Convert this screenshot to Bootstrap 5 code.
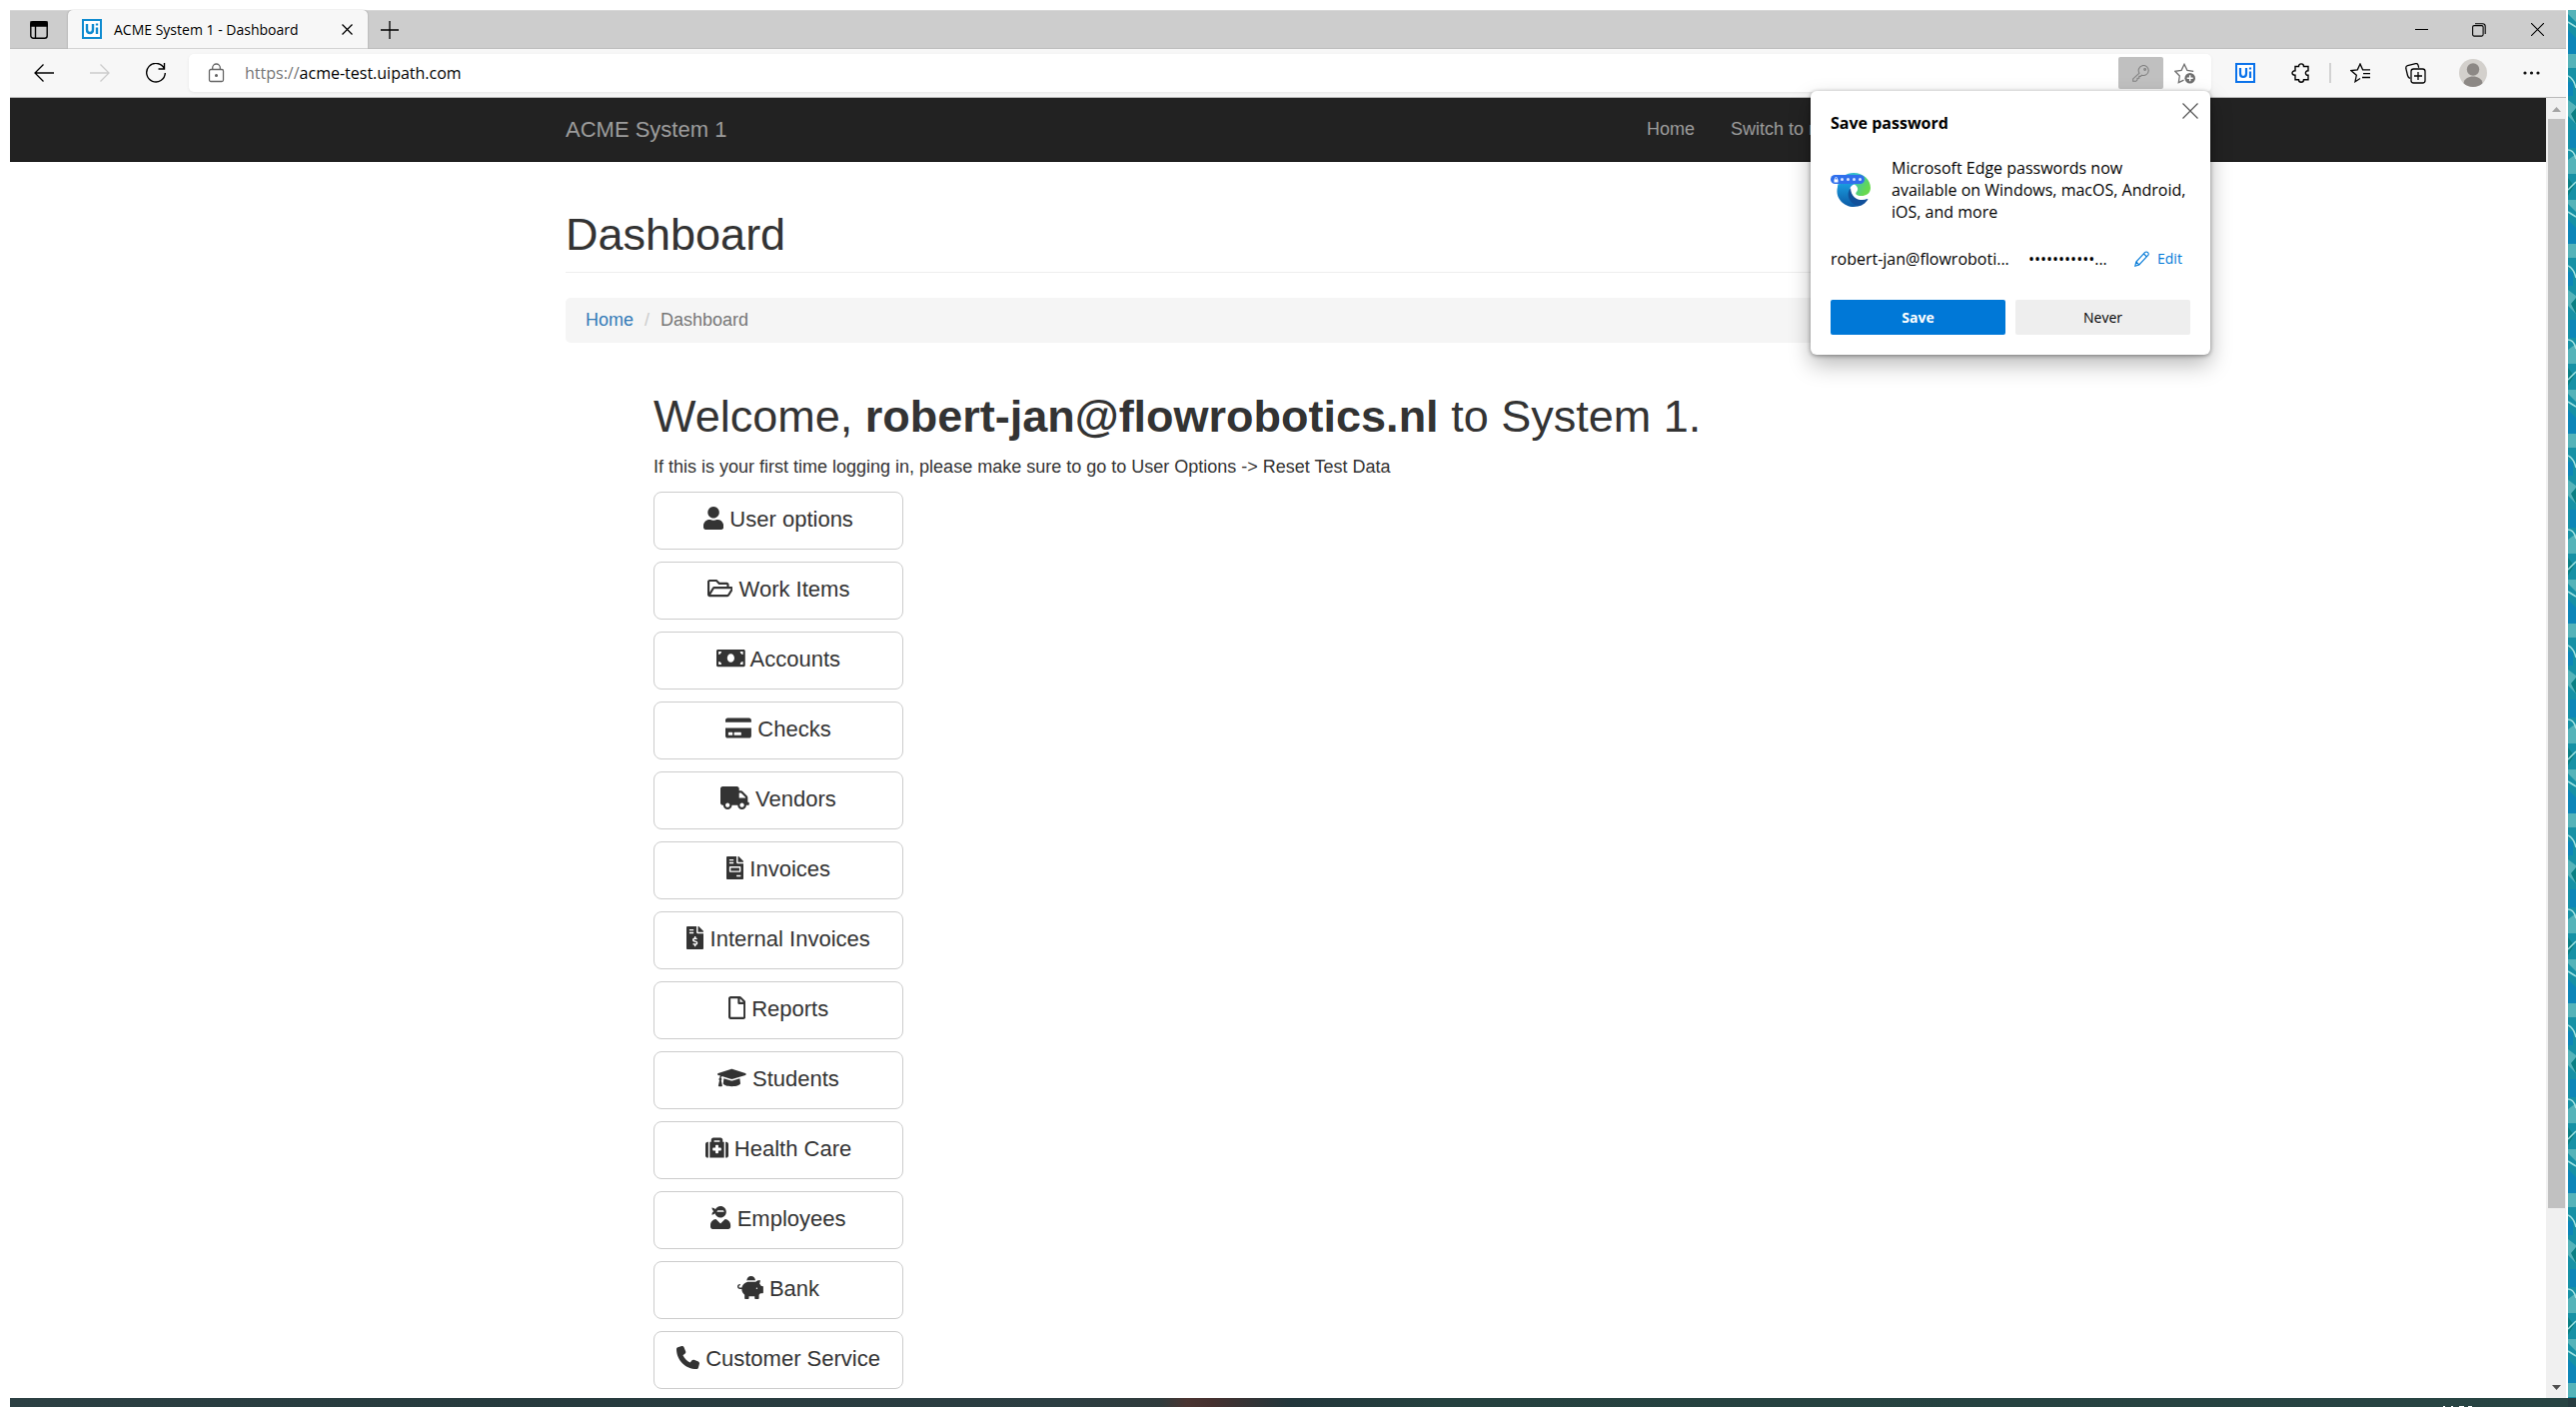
<!DOCTYPE html>
<html lang="en">
<head>
<meta charset="utf-8">
<meta name="viewport" content="width=device-width, initial-scale=1">
<title>ACME System 1 - Dashboard</title>
<link href="https://cdn.jsdelivr.net/npm/bootstrap@5.3.0/dist/css/bootstrap.min.css" rel="stylesheet">
<style>
  :root { --ui: "Open Sans", "Noto Sans", sans-serif; --page: "Liberation Sans", Arial, sans-serif; }
  body { background: #fff; color: #000; font-family: var(--ui); font-size: 14px; height: 100vh; overflow: hidden; fill: none; stroke: currentColor; }
  svg { flex: none; }
  button { color: inherit; }
  .plain { background: none; border: 0; padding: 0; display: flex; align-items: center; justify-content: center; }
  .desktop { padding: 10px 0 0 10px; min-height: 0; }

  .tabstrip { height: 39px; background: #cdcdcd; border-top: 1px solid #d8d8d8; border-bottom: 1px solid #bdbdbd; }
  .workspace { width: 58px; }
  .new-tab { width: 44px; }
  .tab-current { width: 300px; height: 39px; margin-top: -1px; padding: 0 15px 0 14px; background: #f7f7f7; border-radius: 5px 5px 0 0; box-shadow: 0 0 2px #999; clip-path: inset(0 -3px); }
  .tab-title { margin-left: 12px; }
  .win-button { width: 58px; height: 37px; }

  .toolbar { height: 49px; padding: 0 1px 0 6px; background: #f7f7f7; border-bottom: 1px solid #b9b9b9; }
  .tool { width: 56px; height: 40px; }
  .tool.inactive { color: #ccc; }
  .tool-sm { width: 42px; height: 40px; }
  .tool-lg { width: 68px; height: 40px; }
  .profile { width: 48px; height: 40px; }
  .address { height: 38px; margin-left: 5px; padding: 0 5px 0 19px; background: #fff; border-radius: 5px; box-shadow: 0 1px 3px #e6e6e6; }
  .address label, .address input { font-size: 16px; line-height: 24px; }
  .address label { color: #767676; margin-left: 20px; }
  .address input { border: 0; padding: 0; outline: 0; color: #000; background: transparent; min-width: 0; }
  .key-button { width: 45px; height: 32px; background: #c0c0c0; border-radius: 2px; color: #808080; }
  .star-button { width: 43px; height: 32px; color: #6e6e6e; }
  .divider { width: 2px; height: 20px; background: #d2d2d2; }

  .viewport { min-height: 0; }
  .site { min-width: 0; overflow: hidden; font-family: var(--page); font-size: 18px; line-height: 25px; color: #333; background: #fff; }
  .site .container { max-width: 1464px; padding: 0 19px; }
  .site-nav { height: 64px; padding: 0; background: #222; border-bottom: 1px solid #080808; }
  .site-nav .navbar-brand { color: #9d9d9d; font-size: 22px; line-height: 25px; padding: 0; margin: 0; }
  .site-nav .nav { gap: 36px; padding-right: 172px; }
  .site-nav .nav-link { color: #9d9d9d; padding: 0; }
  .headline { font-size: 45px; line-height: 50px; font-weight: 400; margin: 0; }
  .page-top { padding: 48px 0 12px; border-bottom: 1px solid #eee; margin-bottom: 25px; }
  .site .breadcrumb { padding: 10px 20px; margin: 0 0 49px; background: #f5f5f5; border-radius: 5px; --bs-breadcrumb-divider-color: #ccc; --bs-breadcrumb-item-active-color: #777; --bs-breadcrumb-item-padding-x: 11px; }
  .breadcrumb a { color: #337ab7; text-decoration: none; }
  .welcome { padding-left: 88px; }
  .intro { margin: 13px 0 12px; }
  .menu { gap: 12px; width: 250px; }
  .menu .btn { --bs-btn-color: #333; --bs-btn-border-color: #ccc; --bs-btn-border-radius: 8px; --bs-btn-bg: #fff; font-family: var(--page); font-size: 22px; line-height: 30px; padding: 12px 0 14px; }
  .menu svg { height: 23px; fill: #333; stroke: none; vertical-align: -3px; }

  .scroller { width: 20px; padding: 0 1px 0 2px; background: #f0f0f0; }
  .thumb { background: #c1c1c1; flex: 1090 1 0; }
  .rest { flex: 168 1 0; }

  .prompt { right: 356px; top: 81px; width: 400px; padding: 20px; background: #fff; border-radius: 6px; box-shadow: 0 10px 22px rgba(0,0,0,.28), 0 1px 4px rgba(0,0,0,.4); font-size: 16px; line-height: 22px; z-index: 5; }
  .prompt h2 { font-size: 16px; line-height: 24px; font-weight: 700; margin: 0; }
  .prompt .dismiss { right: 12px; top: 12px; color: #555; }
  .prompt .blurb { margin-top: 22px; gap: 21px; }
  .prompt .login { margin: 24px 0 29px; line-height: 24px; }
  .prompt .who { width: 198px; }
  .prompt .secret { width: 106px; }
  .prompt .edit { color: #0078d7; gap: 8px; font-size: 14px; text-decoration: none; }
  .prompt .choices { gap: 10px; }
  .prompt .btn { height: 35px; padding: 0; border: 0; border-radius: 2px; font-size: 14px; }
  .save { background: #0078d7; color: #fff; font-weight: 700; }
  .never { background: #eee; color: #000; font-weight: 500; }

  .wallpaper { width: 8px; margin-left: 2px; }
  .taskbar { height: 9px; margin-left: 10px; padding-right: 96px; border-right: 8px solid #263c40; color: #fff; background: linear-gradient(90deg, #2c4043 0, #263a3d 20%, #2c3e42 41%, #303b3c 45%, #4a3431 46%, #45302f 47%, #22363b 50%, #25413f 56%, #284443 100%); }
</style>
</head>
<body class="d-flex flex-column">

<div class="desktop d-flex flex-grow-1">
  <div class="d-flex flex-column flex-grow-1 position-relative">

    <header class="tabstrip d-flex align-items-center">
      <button class="plain workspace" aria-label="Tab actions">
        <svg width="18" height="18" viewBox="0 0 18 18" stroke-width="1.4"><rect x=".8" y=".8" width="16.4" height="16.4" rx="2.5"/><path d="M1 1h16v4H1z" fill="#000"/><path d="M5.5 5v12"/></svg>
      </button>
      <div class="tab-current d-flex align-items-center">
        <svg width="20" height="20" viewBox="0 0 20 20" stroke="#0f8bd0" stroke-width="2"><path d="M1 1h18v18H1z" fill="#fff"/><path d="M5 5v5.500q0 3.500 3 3.500t3-3.500V5M15 8.500V15M15 4.500v2" stroke-width="2.400"/></svg>
        <span class="tab-title">ACME System 1 - Dashboard</span>
        <button class="plain ms-auto" aria-label="Close tab"><svg width="11" height="11" viewBox="0 0 11 11" stroke-width="1.300"><path d="M.5.5l10 10M10.500.5l-10 10"/></svg></button>
      </div>
      <button class="plain new-tab" aria-label="New tab"><svg width="18" height="18" viewBox="0 0 18 18" stroke-width="1.300"><path d="M9 0v18M0 9h18"/></svg></button>
      <div class="d-flex ms-auto">
        <button class="plain win-button" aria-label="Minimize"><svg width="13" height="13" viewBox="0 0 13 13"><path d="M0 6.500h13"/></svg></button>
        <button class="plain win-button" aria-label="Restore"><svg width="14" height="14" viewBox="0 0 14 14" stroke-width="1.100"><rect x=".6" y="2.600" width="10.500" height="10.500" rx="1.500"/><path d="M3 .7h7.500q2.700 0 2.700 2.700V11"/></svg></button>
        <button class="plain win-button" aria-label="Close"><svg width="13" height="13" viewBox="0 0 13 13" stroke-width="1.100"><path d="M0 0l13 13M13 0L0 13"/></svg></button>
      </div>
    </header>

    <div class="toolbar d-flex align-items-center">
      <button class="plain tool" aria-label="Back"><svg width="20" height="18" viewBox="0 0 20 18" stroke-width="1.300"><path d="M20 9H1M9.500.5L1 9l8.500 8.500"/></svg></button>
      <button class="plain tool inactive" aria-label="Forward"><svg width="20" height="18" viewBox="0 0 20 18" stroke-width="1.300"><path d="M0 9h19M10.500.5L19 9l-8.500 8.500"/></svg></button>
      <button class="plain tool" aria-label="Reload"><svg width="20" height="20" viewBox="0 0 20 20" stroke-width="1.400"><path d="M18.300 5.500A9.300 9.300 0 1 0 19.300 10M18.500 0v6h-6"/></svg></button>
      <div class="address d-flex align-items-center flex-grow-1">
        <svg width="17" height="20" viewBox="0 0 17 20" stroke="#666" stroke-width="1.300"><rect x="1.500" y="6.500" width="14" height="12" rx="1.500"/><path d="M4.700 6.500V4.800a3.800 3.800 0 0 1 7.600 0v1.700"/><circle cx="8.500" cy="12.500" r=".9" fill="#666"/></svg>
        <label for="url">https://</label><input id="url" class="flex-grow-1" type="text" value="acme-test.uipath.com">
        <button class="plain key-button" aria-label="Save password"><svg width="17" height="17" viewBox="0 0 17 17" stroke-width="1.100"><path d="M7 8.200A5 5 0 1 1 9.500 10.200L8.300 11.400H6.800v1.800H5v1.600L3.700 16.300H.7v-2.400z"/><circle cx="12.600" cy="4.500" r=".9"/></svg></button>
        <button class="plain star-button" aria-label="Add to favorites"><svg width="22" height="21" viewBox="0 0 22 21" stroke-width="1.300"><path d="M9.500 17.200L4.300 19.600 5.300 13 .8 8.300l6.300-1L10 1.300l2.900 6 6.300 1"/><circle cx="15.700" cy="15.200" r="5.300" fill="#6e6e6e" stroke="none"/><path d="M15.700 12.200v6M12.700 15.200h6" stroke="#fff" stroke-width="1.500"/></svg></button>
      </div>
      <div class="d-flex align-items-center">
        <button class="plain tool-lg" aria-label="UiPath extension"><svg width="20" height="20" viewBox="0 0 20 20" stroke="#0a72ea" stroke-width="2"><path d="M1 1h18v18H1z" fill="#fff"/><path d="M5 5v5.500q0 3.500 3 3.500t3-3.500V5M15 8.500V15M15 4.500v2" stroke-width="2.200"/></svg></button>
        <button class="plain tool-sm" aria-label="Extensions"><svg width="19" height="20" viewBox="0 0 19 20" stroke-width="1.400"><path d="M4 3.500h3.500C7.500 0 12.500 0 12.500 3.500H17v4.300c-3.500-.3-3.500 4.700 0 4.500v4.500h-4.500c0 3.300-5 3.300-5 0H4v-4.500C0 12.500 0 7.600 4 7.800z"/></svg></button>
        <span class="divider mx-2"></span>
        <button class="plain tool-sm" aria-label="Favorites"><svg width="21" height="20" viewBox="0 0 21 20" stroke-width="1.300"><path d="M10 15.500L5 18.700 6.300 12.300.8 7.500l6.500-.7L10 1l2.600 5.800H20M13 10.700h7M12 14.500h8"/></svg></button>
        <button class="plain tool-lg" aria-label="Collections"><svg width="21" height="21" viewBox="0 0 21 21" stroke-width="1.300"><path d="M5 15.500Q3 14.500 2.500 12.500L.8 5.500Q.5 3.200 2.500 2.700l8-2q2-.4 2.500 1.500l.7 2.500"/><rect x="6" y="6" width="14" height="14" rx="2.500"/><path d="M13 9v8M9 13h8"/></svg></button>
        <button class="plain profile" aria-label="Profile"><svg width="28" height="28" viewBox="0 0 28 28" stroke="none"><circle cx="14" cy="14" r="14" fill="#d3d0cc"/><circle cx="14" cy="10.500" r="6.200" fill="#8c8885"/><path d="M4.500 24.200c1-9 18-9 19 0A14 14 0 0 1 4.500 24.200z" fill="#8c8885"/></svg></button>
        <button class="plain tool-lg" aria-label="Settings and more"><svg width="17" height="4" viewBox="0 0 17 4" stroke="none" fill="#111"><circle cx="2" cy="2" r="1.600"/><circle cx="8.500" cy="2" r="1.600"/><circle cx="15" cy="2" r="1.600"/></svg></button>
      </div>
    </div>

    <div class="viewport d-flex flex-grow-1">
      <div class="site flex-grow-1">
        <nav class="site-nav navbar">
          <div class="container">
            <a class="navbar-brand" href="#">ACME System 1</a>
            <ul class="nav ms-auto">
              <li class="nav-item"><a class="nav-link" href="#">Home</a></li>
              <li class="nav-item"><a class="nav-link" href="#">Switch to n</a></li>
            </ul>
          </div>
        </nav>
        <main class="container">
          <div class="page-top"><h1 class="headline">Dashboard</h1></div>
          <nav aria-label="breadcrumb">
            <ol class="breadcrumb">
              <li class="breadcrumb-item"><a href="#">Home</a></li>
              <li class="breadcrumb-item active" aria-current="page">Dashboard</li>
            </ol>
          </nav>
          <section class="welcome">
            <h1 class="headline">Welcome, <strong>robert-jan@flowrobotics.nl</strong> to System 1.</h1>
            <p class="intro">If this is your first time logging in, please make sure to go to User Options -&gt; Reset Test Data</p>
            <div class="menu d-flex flex-column">
              <a class="btn" href="#"><svg viewBox="0 0 448 512"><path d="M224 256c70.7 0 128-57.3 128-128S294.7 0 224 0 96 57.3 96 128s57.3 128 128 128zm89.600 32h-16.700c-22.200 10.200-46.900 16-72.900 16s-50.600-5.800-72.900-16h-16.700C60.200 288 0 348.200 0 422.400V464c0 26.500 21.500 48 48 48h352c26.500 0 48-21.500 48-48v-41.600c0-74.200-60.200-134.400-134.400-134.400z"/></svg> User options</a>
              <a class="btn" href="#"><svg viewBox="0 0 576 512"><path d="M527.900 224H480v-48c0-26.500-21.500-48-48-48H272l-64-64H48C21.500 64 0 85.500 0 112v288c0 26.500 21.500 48 48 48h400c16.500 0 31.900-8.500 40.700-22.600l79.900-128c20-31.900-3-73.400-40.700-73.400zM48 118c0-3.300 2.700-6 6-6h134.100l64 64H426c3.300 0 6 2.700 6 6v42H152c-16.800 0-32.400 8.800-41.100 23.200L48 351.400zm400 282H72l77.200-128H528z"/></svg> Work Items</a>
              <a class="btn" href="#"><svg viewBox="0 0 640 512"><path d="M608 64H32C14.330 64 0 78.330 0 96v320c0 17.670 14.330 32 32 32h576c17.670 0 32-14.330 32-32V96c0-17.670-14.330-32-32-32zM48 400v-64c35.350 0 64 28.650 64 64H48zm0-224v-64h64c0 35.350-28.650 64-64 64zm272 176c-44.190 0-80-42.990-80-96 0-53.020 35.820-96 80-96s80 42.980 80 96c0 53.030-35.830 96-80 96zm272 48h-64c0-35.350 28.650-64 64-64v64zm0-224c-35.350 0-64-28.650-64-64h64v64z"/></svg> Accounts</a>
              <a class="btn" href="#"><svg viewBox="0 0 576 512"><path d="M0 432c0 26.500 21.500 48 48 48h480c26.500 0 48-21.500 48-48V256H0v176zm192-68c0-6.600 5.400-12 12-12h136c6.600 0 12 5.400 12 12v40c0 6.600-5.400 12-12 12H204c-6.600 0-12-5.400-12-12v-40zm-128 0c0-6.600 5.400-12 12-12h72c6.600 0 12 5.400 12 12v40c0 6.600-5.400 12-12 12H76c-6.600 0-12-5.400-12-12v-40zM576 80v48H0V80c0-26.500 21.500-48 48-48h480c26.500 0 48 21.500 48 48z"/></svg> Checks</a>
              <a class="btn" href="#"><svg viewBox="0 0 640 512"><path d="M624 352h-16V243.900c0-12.700-5.100-24.900-14.100-33.900L494 110.100c-9-9-21.200-14.100-33.900-14.100H416V48c0-26.500-21.500-48-48-48H48C21.500 0 0 21.500 0 48v320c0 26.500 21.500 48 48 48h16c0 53 43 96 96 96s96-43 96-96h128c0 53 43 96 96 96s96-43 96-96h48c8.800 0 16-7.200 16-16v-32c0-8.800-7.200-16-16-16zM160 464c-26.500 0-48-21.500-48-48s21.500-48 48-48 48 21.500 48 48-21.500 48-48 48zm320 0c-26.500 0-48-21.500-48-48s21.500-48 48-48 48 21.500 48 48-21.500 48-48 48zm80-208H416V144h44.100l99.900 99.900V256z"/></svg> Vendors</a>
              <a class="btn" href="#"><svg viewBox="0 0 384 512"><path d="M288 256H96v64h192v-64zm89-151L279.100 7c-4.500-4.500-10.600-7-17-7H256v128h128v-6.100c0-6.300-2.500-12.400-7-16.900zm-153 31V0H24C10.700 0 0 10.700 0 24v464c0 13.300 10.700 24 24 24h336c13.300 0 24-10.700 24-24V160H248c-13.200 0-24-10.800-24-24zM64 72c0-4.420 3.580-8 8-8h80c4.420 0 8 3.580 8 8v16c0 4.420-3.580 8-8 8H72c-4.420 0-8-3.580-8-8V72zm0 64c0-4.420 3.580-8 8-8h80c4.420 0 8 3.580 8 8v16c0 4.420-3.580 8-8 8H72c-4.420 0-8-3.580-8-8v-16zm256 304c0 4.420-3.580 8-8 8h-80c-4.420 0-8-3.580-8-8v-16c0-4.420 3.580-8 8-8h80c4.420 0 8 3.580 8 8v16zm0-200v96c0 8.840-7.160 16-16 16H80c-8.840 0-16-7.160-16-16v-96c0-8.840 7.160-16 16-16h224c8.840 0 16 7.160 16 16z"/></svg> Invoices</a>
              <a class="btn" href="#"><svg viewBox="0 0 384 512"><path d="M377 105L279.100 7c-4.500-4.500-10.600-7-17-7H256v128h128v-6.100c0-6.300-2.500-12.400-7-16.900zm-153 31V0H24C10.700 0 0 10.700 0 24v464c0 13.300 10.700 24 24 24h336c13.300 0 24-10.700 24-24V160H248c-13.200 0-24-10.800-24-24zM64 72c0-4.420 3.580-8 8-8h80c4.420 0 8 3.580 8 8v16c0 4.420-3.580 8-8 8H72c-4.420 0-8-3.580-8-8V72zm0 80v-16c0-4.420 3.580-8 8-8h80c4.420 0 8 3.580 8 8v16c0 4.420-3.580 8-8 8H72c-4.420 0-8-3.580-8-8zm144 263.880V440c0 4.420-3.580 8-8 8h-16c-4.420 0-8-3.580-8-8v-24.290c-11.290-.58-22.270-4.520-31.370-11.350-3.900-2.930-4.100-8.770-.57-12.140l11.750-11.210c2.770-2.640 6.890-2.760 10.130-.73 3.870 2.420 8.260 3.720 12.820 3.720h28.110c6.500 0 11.800-5.920 11.800-13.190 0-5.950-3.610-11.190-8.770-12.730l-45-13.500c-18.590-5.580-31.580-23.420-31.580-43.390 0-24.520 19.050-44.440 42.670-45.070V232c0-4.420 3.580-8 8-8h16c4.420 0 8 3.580 8 8v24.290c11.290.58 22.270 4.510 31.370 11.350 3.900 2.930 4.100 8.770.57 12.140l-11.750 11.210c-2.770 2.640-6.890 2.760-10.130.73-3.870-2.430-8.260-3.720-12.820-3.720h-28.110c-6.500 0-11.800 5.920-11.800 13.190 0 5.950 3.610 11.190 8.770 12.730l45 13.500c18.590 5.580 31.580 23.420 31.580 43.390 0 24.530-19.050 44.440-42.670 45.070z"/></svg> Internal Invoices</a>
              <a class="btn" href="#"><svg viewBox="0 0 384 512"><path d="M369.900 97.900L286 14C277 5 264.800 0 252.100 0H48C21.500 0 0 21.500 0 48v416c0 26.500 21.500 48 48 48h288c26.500 0 48-21.500 48-48V131.900c0-12.700-5.100-25-14.100-34zM332.100 128H256V51.900l76.100 76.100zM48 464V48h160v104c0 13.300 10.700 24 24 24h104v288H48z"/></svg> Reports</a>
              <a class="btn" href="#"><svg viewBox="0 0 640 512"><path d="M622.340 153.200L343.400 67.500c-15.200-4.670-31.600-4.670-46.790 0L17.660 153.200c-23.540 7.230-23.540 38.360 0 45.590l48.630 14.940c-10.670 13.190-17.230 29.280-17.880 46.900C38.780 266.150 32 276.110 32 288c0 10.780 5.680 19.850 13.860 25.650L20.330 428.530C18.110 438.520 25.710 448 35.940 448h56.110c10.240 0 17.840-9.480 15.620-19.470L82.140 313.650C90.320 307.850 96 298.780 96 288c0-11.570-6.470-21.250-15.660-26.870.76-15.020 8.440-28.300 20.690-36.720L296.600 284.500c9.060 2.780 26.440 6.250 46.790 0l278.950-85.700c23.550-7.240 23.550-38.360 0-45.600zM352.790 315.090c-28.530 8.760-52.840 3.920-65.590 0l-145.020-44.550L128 384c0 35.350 85.960 64 192 64s192-28.650 192-64l-14.180-113.470-145.030 44.560z"/></svg> Students</a>
              <a class="btn" href="#"><svg viewBox="0 0 512 512"><path d="M96 480h320V128h-32V80c0-26.510-21.490-48-48-48H176c-26.510 0-48 21.490-48 48v48H96v352zm96-384h128v32H192V96zm320 80v256c0 26.510-21.490 48-48 48h-16V128h16c26.510 0 48 21.490 48 48zM64 480H48c-26.510 0-48-21.490-48-48V176c0-26.510 21.490-48 48-48h16v352zm288-208v32c0 8.837-7.163 16-16 16h-48v48c0 8.837-7.163 16-16 16h-32c-8.837 0-16-7.163-16-16v-48h-48c-8.837 0-16-7.163-16-16v-32c0-8.837 7.163-16 16-16h48v-48c0-8.837 7.163-16 16-16h32c8.837 0 16 7.163 16 16v48h48c8.837 0 16 7.163 16 16z"/></svg> Health Care</a>
              <a class="btn" href="#"><svg viewBox="0 0 448 512"><path d="M325.400 289.200L224 390.600 122.600 289.200C54 295.300 0 352.200 0 422.400V464c0 26.500 21.500 48 48 48h352c26.500 0 48-21.500 48-48v-41.600c0-70.200-54-127.100-122.600-133.200zM32 192c27.300 0 51.800-11.500 69.200-29.700 15.100 53.900 64 93.700 122.800 93.700 70.700 0 128-57.300 128-128S294.700 0 224 0c-50.400 0-93.600 29.400-114.500 71.800C92.100 47.800 64 32 32 32c0 33.400 17.100 62.800 43.100 80-26 17.200-43.100 46.600-43.100 80zm144-96h96c17.700 0 32 14.300 32 32H144c0-17.700 14.300-32 32-32z"/></svg> Employees</a>
              <a class="btn" href="#"><svg viewBox="0 0 576 512"><path d="M560 224h-29.500c-8.800-20-21.600-37.700-37.400-52.500L512 96h-32c-29.400 0-55.400 13.500-73 34.300-7.600-1.100-15.100-2.300-23-2.300H256c-77.400 0-141.900 55-156.800 128H56c-14.800 0-26.500-13.500-23.500-28.800C34.700 215.800 45.400 208 57 208h1c3.300 0 6-2.700 6-6v-20c0-3.300-2.700-6-6-6-28.500 0-53.900 20.400-57.500 48.600C-3.900 258.800 22.700 288 56 288h40c0 52.200 25.400 98.100 64 127.300V496c0 8.800 7.200 16 16 16h64c8.800 0 16-7.200 16-16v-48h128v48c0 8.800 7.200 16 16 16h64c8.800 0 16-7.200 16-16v-80.700c11.800-8.900 22.300-19.400 31.300-31.300H560c8.800 0 16-7.200 16-16V240c0-8.800-7.200-16-16-16zm-128 64c-8.800 0-16-7.200-16-16s7.200-16 16-16 16 7.200 16 16-7.200 16-16 16zM256 96h128c5.400 0 10.700.4 15.900.8 0-.3.1-.5.1-.8 0-53-43-96-96-96s-96 43-96 96c0 2.100.5 4.100.6 6.200 15.200-3.900 31-6.200 47.400-6.200z"/></svg> Bank</a>
              <a class="btn" href="#"><svg viewBox="0 0 512 512"><path d="M164.900 24.600c-7.700-18.600-28-28.500-47.400-23.200l-88 24C12.100 30.200 0 46 0 64C0 311.400 200.600 512 448 512c18 0 33.800-12.100 38.600-29.500l24-88c5.300-19.400-4.600-39.700-23.200-47.400l-96-40c-16.300-6.800-35.200-2.100-46.300 11.600L304.700 368C234.300 334.700 177.300 277.700 144 207.300L193.300 167c13.700-11.200 18.400-30 11.600-46.300l-40-96z"/></svg> Customer Service</a>
            </div>
          </section>
        </main>
      </div>
      <div class="scroller d-flex flex-column align-items-stretch">
        <svg width="17" height="21" viewBox="0 0 17 21" stroke="none" fill="#a3a3a3"><path d="M4 14l4.500-5L13 14z"/></svg>
        <div class="thumb"></div>
        <div class="rest"></div>
        <svg width="17" height="22" viewBox="0 0 17 22" stroke="none" fill="#505050"><path d="M4 9l4.500 5L13 9z"/></svg>
      </div>
    </div>

    <section class="prompt position-absolute" aria-label="Save password prompt">
      <button class="plain dismiss position-absolute" aria-label="Dismiss"><svg width="16" height="16" viewBox="0 0 16 16" stroke-width="1.200"><path d="M.5.5l15 15M15.500.5l-15 15"/></svg></button>
      <h2>Save password</h2>
      <div class="blurb d-flex align-items-center">
        <svg width="40" height="36" viewBox="0 0 40 36" stroke="none">
          <defs>
            <linearGradient id="sea" x1="0" y1="0" x2="1" y2=".4"><stop offset="0" stop-color="#1b9de2"/><stop offset=".5" stop-color="#35c1c5"/><stop offset="1" stop-color="#66d94f"/></linearGradient>
            <linearGradient id="deep" x1="0" y1="0" x2="0" y2="1"><stop offset="0" stop-color="#1ba0e2"/><stop offset="1" stop-color="#0c59a4"/></linearGradient>
          </defs>
          <path d="M7 14C9 5 16 1 23 1c10 0 17 7 17 15 0 6-5 8-9 8-5 0-7-2-5-4 3-3 0-8-5-8-6 0-10 3-14 6z" fill="url(#sea)"/>
          <path d="M7 15c3-5 12-6 17-3-5 2-6 7-4 11 3 6 10 7 17 4-3 5-8 8-14 8C14 35 4 27 7 15z" fill="url(#deep)"/>
          <path d="M20 16c-5 6-2 16 8 18.300 5-1 8-4.300 9.500-7.300-8 3-17 0-17.500-11z" fill="#11509a"/>
          <rect y="3" width="34" height="9" rx="4.500" fill="#2f6fec"/>
          <path d="M3.500 7.500h4v3h-4z" fill="#fff"/><path d="M4.500 8V6.500a1 1 0 0 1 2 0V8" stroke="#fff" stroke-width=".8"/>
          <g fill="#dbe6ff"><circle cx="11.500" cy="7.500" r="1.500"/><circle cx="17.500" cy="7.500" r="1.500"/><circle cx="23.500" cy="7.500" r="1.500"/><circle cx="29.500" cy="7.500" r="1.500"/></g>
        </svg>
        <div>Microsoft Edge passwords now<br>available on Windows, macOS, Android,<br>iOS, and more</div>
      </div>
      <div class="login d-flex align-items-center">
        <span class="who">robert-jan@flowroboti...</span>
        <span class="secret">•••••••••••...</span>
        <a class="edit d-flex align-items-center" href="#"><svg width="15" height="16" viewBox="0 0 15 16" stroke-width="1.100"><path d="M.8 15.200l1-4.200L10.500 1.700q1.500-1.400 3 0t0 3L4.800 14zM9.500 3l3 3M1.800 11l3 3"/></svg>Edit</a>
      </div>
      <div class="choices d-flex">
        <button class="btn save flex-fill w-50">Save</button>
        <button class="btn never flex-fill w-50">Never</button>
      </div>
    </section>
  </div>

  <svg class="wallpaper" viewBox="0 0 8 1389" preserveAspectRatio="none">
    <defs>
      <pattern id="water" width="8" height="190" patternUnits="userSpaceOnUse">
        <path d="M0 0h8v190H0z" fill="#1691a5" stroke="none"/>
        <path d="M0 0h8v12L0 4zM0 44h8v14H0zM0 90l8 6v18l-8-8zM0 150l8-6v20H0z" fill="#55b3b9" stroke="none"/>
        <path d="M0 20l8 8v16H0zM0 72h5v14H0zM2 120h6v18H2z" fill="#0d86b8" stroke="none"/>
        <path d="M3 104l5-6v16zM0 168l6 8-6 10z" fill="#0a7f83" stroke="none"/>
        <path d="M0 66q6 3 8 12M0 140q6 0 8 9M0 12l8 5M0 180l8-8" stroke="#9de0e0" stroke-width="1.500"/>
      </pattern>
    </defs>
    <path d="M0 0h8v1389H0z" fill="url(#water)" stroke="none"/>
  </svg>
</div>

<footer class="taskbar d-flex justify-content-end align-items-end">
  <svg width="29" height="1" viewBox="0 0 29 1" stroke="none" fill="#fff"><path d="M0 0h2v1H0zM8 0h2v1H8zM16 0h5v1h-5zM25 0h4v1h-4z"/></svg>
</footer>

<script src="https://cdn.jsdelivr.net/npm/bootstrap@5.3.0/dist/js/bootstrap.bundle.min.js"></script>
</body>
</html>
